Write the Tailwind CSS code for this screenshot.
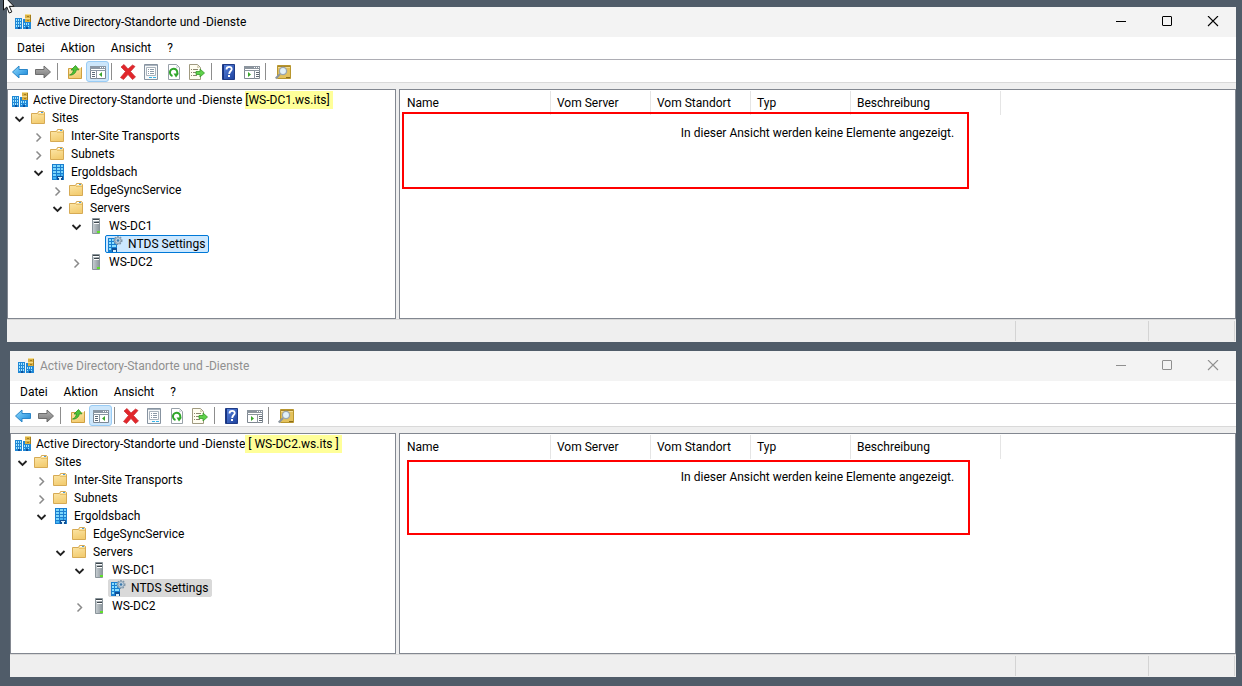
<!DOCTYPE html>
<html lang="de">
<head>
<meta charset="utf-8">
<meta name="viewport" content="width=device-width, initial-scale=1">
<title>Active Directory-Standorte und -Dienste</title>
<script src="https://cdn.jsdelivr.net/npm/@tailwindcss/browser@4"></script>
</head>
<body class="relative flex min-h-screen flex-col gap-[9px] bg-[#505c69] pt-[7px] pr-[6px] pb-[9px] font-[Roboto,'Noto_Sans',sans-serif] text-[12px] leading-[18px] text-black">

<!-- Shared icons -->
<svg class="absolute size-0" aria-hidden="true">
  <defs>
    <linearGradient id="gFolder" x1="0" y1="0" x2="0.3" y2="1"><stop offset="0" stop-color="#fde9ae"/><stop offset="1" stop-color="#f3cd72"/></linearGradient>
    <linearGradient id="gBlue" x1="0" y1="0" x2="1" y2="1"><stop offset="0" stop-color="#8fdcff"/><stop offset="1" stop-color="#1583d6"/></linearGradient>
    <linearGradient id="gGray" x1="0" y1="0" x2="0" y2="1"><stop offset="0" stop-color="#b5b5b5"/><stop offset="1" stop-color="#777"/></linearGradient>
    <linearGradient id="gServer" x1="0" y1="0" x2="1" y2="0"><stop offset="0" stop-color="#c9d0d4"/><stop offset="1" stop-color="#8b959b"/></linearGradient>
    <linearGradient id="gHelp" x1="0" y1="0" x2="1" y2="1"><stop offset="0" stop-color="#5a86e0"/><stop offset="1" stop-color="#1b3f9c"/></linearGradient>

    <symbol id="i-ad" viewBox="0 0 16 16">
      <path fill="#2088d6" d="M0 4h7v11H0zM8 5h8v10H8z"/>
      <path fill="#a5e6ff" d="M1 5h1v2H1zM3 5h1v2H3zM5 5h1v2H5zM1 8h1v2H1zM3 8h1v2H3zM5 8h1v2H5zM1 11h1v2H1zM3 11h1v2H3zM5 11h1v2H5zM9 9h1v2H9zM11 9h1v2h-1zM13 9h1v2h-1zM9 12h1v1H9zM13 12h1v1h-1z"/>
      <path fill="#0b4f9b" d="M3 13h2v2H3zM11 13h2v2h-2z"/>
      <path fill="#d9b044" d="M10 1l1-1h4l1 1v7h-6z"/>
      <path fill="#f5dd8c" d="M10 1l1-1h4l1 1zM10 4h6v1h-6z"/>
      <path fill="#a27c1e" d="M12 2h2v1h-2zM12 6h2v1h-2zM15 1h1v7h-1z"/>
    </symbol>
    <symbol id="i-folder" viewBox="0 0 16 16">
      <path fill="url(#gFolder)" stroke="#d6aa54" d="M.5 3.500h6l1-2h5l1 1v11H.5z"/>
      <path fill="#fff" d="M8 2h4v1H8z"/><path fill="#4a9be0" d="M10 2h2v1h-2z"/><path fill="#e9c26a" d="M7 4h6v1H7z"/>
    </symbol>
    <symbol id="i-site" viewBox="0 0 16 16">
      <path fill="#1a7fd0" d="M2 0h12v16H2z"/>
      <path fill="#7cd6fb" d="M3 1h3v2H3zM7 1h3v2H7zM11 1h2v2h-2zM3 4h3v2H3zM7 4h3v2H7zM11 4h2v2h-2zM3 7h3v2H3zM7 7h3v2H7zM11 7h2v2h-2zM3 10h3v2H3z"/>
      <path fill="#45b4f2" d="M7 10h3v2H7zM11 10h2v2h-2zM3 13h3v2H3z"/>
      <path fill="#0e4f96" d="M7 12h6v4H7z"/><path fill="#d9f3ff" d="M8 13h4v1H8zM9 14h2v2H9z"/>
    </symbol>
    <symbol id="i-server" viewBox="0 0 16 16">
      <path fill="url(#gServer)" stroke="#8b959b" d="M4.500 .5h7v15h-7z"/>
      <path fill="#3e474d" d="M5 1h6v1H5zM6 4h5v1H6z"/><path fill="#fff" d="M5 2h6v1H5zM6 5h5v1H6z"/>
      <path fill="#5fe02c" d="M9 13h3v2H9z"/>
    </symbol>
    <symbol id="i-ntds" viewBox="0 0 16 16">
      <path fill="#1a7fd0" d="M1 2h9v14H1z"/>
      <path fill="#8ce0ff" d="M2 3h2v2H2zM5 3h2v2H5zM2 6h2v2H2zM5 6h2v2H5zM2 9h2v2H2zM5 9h4v2H5zM2 12h2v2H2z"/>
      <path fill="#0e4f96" d="M5 12h5v4H5z"/><path fill="#d9f3ff" d="M6 14h3v2H6z"/>
      <circle cx="11" cy="4.500" r="3.700" fill="#c3d3e0" stroke="#7d95a8" stroke-width="1.600" stroke-dasharray="1.500 1.200"/>
      <circle cx="11" cy="4.500" r="3" fill="#c3d3e0" stroke="#8ba1b3"/><circle cx="11" cy="4.500" r="1.300" fill="#3b79ad"/>
    </symbol>
    <symbol id="i-open" viewBox="0 0 16 16"><path fill="none" stroke="#222" stroke-width="1.800" d="M4.500 7l4 4 4-4"/></symbol>
    <symbol id="i-closed" viewBox="0 0 16 16"><path fill="none" stroke="#8a8a8a" stroke-width="1.500" d="M6.500 5.500l4 4-4 4"/></symbol>

    <symbol id="i-back" viewBox="0 0 16 16"><path fill="url(#gBlue)" stroke="#2b86c8" stroke-linejoin="round" d="M.5 8L7 2v3.500h8.500v5H7V14z"/></symbol>
    <symbol id="i-fwd" viewBox="0 0 16 16"><path fill="url(#gGray)" stroke="#6d6d6d" stroke-linejoin="round" d="M15.500 8L9 2v3.500H.5v5H9V14z"/></symbol>
    <symbol id="i-up" viewBox="0 0 16 16">
      <path fill="url(#gFolder)" stroke="#cf9f40" d="M1.500 4.500h5l1-1h7v11h-13z"/><path fill="#fff" d="M10 3h4v1h-4z"/>
      <path fill="#4cc336" stroke="#2c8f20" stroke-width=".8" d="M2.500 11c2-.5 3.500-2 4-5H4l4.500-4.500L12 5.800H9.300C9 9 6 11.500 2.500 11z"/>
    </symbol>
    <symbol id="i-tree" viewBox="0 0 16 16">
      <path fill="#fff" stroke="#7b8794" d="M.5 2.500h15v12H.5z"/><path fill="#8b97a4" d="M0 2h16v3H0z"/><path fill="#fff" d="M10 3h1v1h-1zM12 3h1v1h-1zM14 3h1v1h-1z"/>
      <path fill="#8b97a4" d="M0 6h16v1H0zM6 6h1v9H6z"/><path fill="#5d6c7b" d="M2 8h3v1H2zM2 10h3v1H2zM2 12h3v1H2z"/><path fill="#3aa52c" d="M12 8v5l-3-2.500z"/>
    </symbol>
    <symbol id="i-del" viewBox="0 0 16 16"><path fill="#e2262b" stroke="#c92d31" stroke-width=".7" stroke-linejoin="round" d="M1 3l3-2.500 4 4.500 4.500-4L15 2.500l-4.500 5L15.500 13l-3 2.500L8 10.500 3.500 15.500.5 13.500l5-6z"/></symbol>
    <symbol id="i-props" viewBox="0 0 16 16">
      <path fill="#f7f9fa" stroke="#8793a0" d="M1.500 .5h13v15h-13z"/><path fill="#aab4bf" d="M2 1h12v1H2z"/><path fill="#fff" stroke="#a9b3bd" d="M3.500 3.500h9v8h-9z"/>
      <path fill="#8c9aa8" d="M5 5h1v1H5zM7 5h4v1H7zM5 7h1v1H5zM7 7h4v1H7zM5 9h1v1H5zM7 9h4v1H7z"/><path fill="#35b4ea" d="M6 13h3v1H6zM10 13h3v1h-3z"/>
    </symbol>
    <symbol id="i-refresh" viewBox="0 0 16 16">
      <path fill="#fff" stroke="#98a1a9" d="M2.500 .5h8l3 3v12h-11z"/><path fill="#d7dce0" d="M10 1v3h3z"/>
      <path fill="none" stroke="#30a62b" stroke-width="2" d="M6.500 12A3.700 3.700 0 1 1 11 10"/><path fill="#30a62b" d="M7.500 9.500H13L10 13.500z"/>
    </symbol>
    <symbol id="i-export" viewBox="0 0 16 16">
      <path fill="#fffdf0" stroke="#a09a80" d="M.5 .5h8l3 3v12H.5z"/><path fill="#d9d3b5" d="M8 1v3h3z"/>
      <path fill="#8b866e" d="M2 5h1v1H2zM4 5h5v1H4zM2 8h1v1H2zM4 8h3v1H4zM2 11h1v1H2zM4 11h4v1H4z"/>
      <path fill="#5fd14a" stroke="#349a27" stroke-width=".8" d="M7 7.500h4V5l4.500 4-4.500 4v-2.500H7z"/>
    </symbol>
    <symbol id="i-help" viewBox="0 0 16 16">
      <path fill="url(#gHelp)" stroke="#1f3b86" d="M1.500 .5h12v15h-12z"/><path fill="#173480" d="M2 1h1v14H2z"/>
      <path fill="none" stroke="#fff" stroke-width="1.800" d="M5.500 5.500C5.500 2 11.200 2.200 10.700 5.300 10.500 7 8.200 7.300 8.200 10"/><path fill="#fff" d="M7 11h2v2H7z"/>
    </symbol>
    <symbol id="i-panel" viewBox="0 0 16 16">
      <path fill="#fff" stroke="#7e8790" d="M.5 2.500h15v12H.5z"/><path fill="#8c959e" d="M0 2h16v3H0z"/><path fill="#fff" d="M10 3h1v1h-1zM12 3h1v1h-1zM14 3h1v1h-1z"/>
      <path fill="#8c959e" d="M0 6h16v1H0zM10 6h1v9h-1z"/><path fill="#5f6972" d="M12 8h3v1h-3zM12 10h3v1h-3zM12 12h3v1h-3z"/><path fill="#3aa52c" d="M4 8v5l3-2.500z"/>
    </symbol>
    <symbol id="i-find" viewBox="0 0 16 16">
      <path fill="#e3c15c" stroke="#b8962f" d="M2.500 1.500h13v13h-13z"/><path fill="#a98729" d="M3 2h12v1H3z"/><path fill="#f3dc92" d="M3 3h12v1H3z"/><path fill="#8a6c1c" d="M11 13h4v1h-4z"/>
      <path stroke="#8b959e" stroke-width="2" d="M.7 14.500L5 10"/><circle cx="8" cy="7" r="3.600" fill="#e2f1f9" stroke="#9aa5ae" stroke-width="1.300"/>
    </symbol>

    <symbol id="i-min" viewBox="0 0 12 12"><path stroke="currentColor" d="M1 5.500h10"/></symbol>
    <symbol id="i-max" viewBox="0 0 12 12"><rect x="1.500" y=".5" width="9" height="9" rx=".5" fill="none" stroke="currentColor"/></symbol>
    <symbol id="i-close" viewBox="0 0 12 12"><path stroke="currentColor" stroke-width="1.100" d="M1 0l10 10M11 0L1 10"/></symbol>
  </defs>
</svg>

<!-- Window: WS-DC1 -->
<section class="ml-[7px] flex flex-auto flex-col bg-[#efefef]" aria-label="WS-DC1">
  <header class="flex h-[30px] items-center bg-[#f3f3f3] pl-2">
    <svg class="size-4"><use href="#i-ad"/></svg>
    <h1 class="ml-[6px] flex-1 whitespace-nowrap">Active Directory-Standorte und -Dienste</h1>
    <button aria-label="Minimieren" class="flex h-full w-[46px] items-center justify-center"><svg class="size-3"><use href="#i-min"/></svg></button>
    <button aria-label="Maximieren" class="flex h-full w-[46px] items-center justify-center"><svg class="size-3"><use href="#i-max"/></svg></button>
    <button aria-label="Schließen" class="flex h-full w-[46px] items-center justify-center"><svg class="size-3"><use href="#i-close"/></svg></button>
  </header>
  <nav class="flex h-[23px] items-center gap-4 border-b border-[#adadb4] bg-white pl-[10px]">
    <button>Datei</button><button>Aktion</button><button>Ansicht</button><button>?</button>
  </nav>
  <div role="toolbar" aria-label="Werkzeuge" class="flex h-[23px] border-b border-[#d9d9d9] bg-white pt-px pl-px">
    <button aria-label="Zurück" class="flex w-[23px] items-center justify-center"><svg class="size-4"><use href="#i-back"/></svg></button>
    <button aria-label="Vorwärts" class="flex w-[23px] items-center justify-center"><svg class="size-4"><use href="#i-fwd"/></svg></button>
    <span class="my-[2px] mr-[5px] ml-[3px] w-px bg-[#8d8d8d]"></span>
    <button aria-label="Nach oben" class="flex w-[23px] items-center justify-center"><svg class="size-4"><use href="#i-up"/></svg></button>
    <button aria-label="Konsolenstruktur" aria-pressed="true" class="flex w-[23px] items-center justify-center rounded-[3px] border border-[#99ccf5] bg-[#cce6fb]"><svg class="size-4"><use href="#i-tree"/></svg></button>
    <span class="my-[2px] mr-[4px] ml-[2px] w-px bg-[#8d8d8d]"></span>
    <button aria-label="Löschen" class="flex w-[23px] items-center justify-center"><svg class="size-4"><use href="#i-del"/></svg></button>
    <button aria-label="Eigenschaften" class="flex w-[23px] items-center justify-center"><svg class="size-4"><use href="#i-props"/></svg></button>
    <button aria-label="Aktualisieren" class="flex w-[23px] items-center justify-center"><svg class="size-4"><use href="#i-refresh"/></svg></button>
    <button aria-label="Liste exportieren" class="flex w-[23px] items-center justify-center"><svg class="size-4"><use href="#i-export"/></svg></button>
    <span class="my-[2px] mr-[5px] ml-[3px] w-px bg-[#8d8d8d]"></span>
    <button aria-label="Hilfe" class="flex w-[23px] items-center justify-center"><svg class="size-4"><use href="#i-help"/></svg></button>
    <button aria-label="Aktionsbereich" class="flex w-[23px] items-center justify-center"><svg class="size-4"><use href="#i-panel"/></svg></button>
    <span class="my-[2px] mr-[5px] ml-[2px] w-px bg-[#8d8d8d]"></span>
    <button aria-label="Suchen" class="flex w-[23px] items-center justify-center"><svg class="size-4"><use href="#i-find"/></svg></button>
  </div>
  <div class="mt-[6px] flex min-h-[221px] flex-1 gap-[3px]">
    <div role="tree" class="w-[389px] border border-[#828790] bg-white pt-px whitespace-nowrap">
      <div role="treeitem" class="flex h-[18px] items-center pl-1"><svg class="size-4"><use href="#i-ad"/></svg><span class="ml-[5px]">Active Directory-Standorte und -Dienste&nbsp;</span><mark class="bg-[#ffff99] pr-[3px] text-black">[WS-DC1.ws.its]</mark></div>
      <ul class="pl-[3px]">
        <li><div class="flex h-[18px] items-center gap-1"><svg class="size-4"><use href="#i-open"/></svg><svg class="size-4"><use href="#i-folder"/></svg><span class="pl-px">Sites</span></div>
          <ul class="pl-[19px]">
            <li class="flex h-[18px] items-center gap-1"><svg class="size-4"><use href="#i-closed"/></svg><svg class="size-4"><use href="#i-folder"/></svg><span class="pl-px">Inter-Site Transports</span></li>
            <li class="flex h-[18px] items-center gap-1"><svg class="size-4"><use href="#i-closed"/></svg><svg class="size-4"><use href="#i-folder"/></svg><span class="pl-px">Subnets</span></li>
            <li><div class="flex h-[18px] items-center gap-1"><svg class="size-4"><use href="#i-open"/></svg><svg class="size-4"><use href="#i-site"/></svg><span class="pl-px">Ergoldsbach</span></div>
              <ul class="pl-[19px]">
                <li class="flex h-[18px] items-center gap-1"><svg class="size-4"><use href="#i-closed"/></svg><svg class="size-4"><use href="#i-folder"/></svg><span class="pl-px">EdgeSyncService</span></li>
                <li><div class="flex h-[18px] items-center gap-1"><svg class="size-4"><use href="#i-open"/></svg><svg class="size-4"><use href="#i-folder"/></svg><span class="pl-px">Servers</span></div>
                  <ul class="pl-[19px]">
                    <li><div class="flex h-[18px] items-center gap-1"><svg class="size-4"><use href="#i-open"/></svg><svg class="size-4"><use href="#i-server"/></svg><span class="pl-px">WS-DC1</span></div>
                      <ul class="pl-[37px]">
                        <li class="flex"><button class="flex h-[18px] items-center gap-[5px] rounded-xs border border-[#0078d7] bg-[#cce8ff] pr-[3px] pl-px"><svg class="size-4"><use href="#i-ntds"/></svg>NTDS Settings</button></li>
                      </ul>
                    </li>
                    <li class="flex h-[18px] items-center gap-1"><svg class="size-4"><use href="#i-closed"/></svg><svg class="size-4"><use href="#i-server"/></svg><span class="pl-px">WS-DC2</span></li>
                  </ul>
                </li>
              </ul>
            </li>
          </ul>
        </li>
      </ul>
    </div>
    <div class="relative flex-1 border border-[#828790] bg-white pt-px">
      <table class="table-fixed border-separate border-spacing-0 text-left whitespace-nowrap">
        <thead><tr class="h-6">
          <th class="w-[151px] border-r border-[#e5e5e5] pl-[7px] font-normal">Name</th>
          <th class="w-[100px] border-r border-[#e5e5e5] pl-[6px] font-normal">Vom Server</th>
          <th class="w-[100px] border-r border-[#e5e5e5] pl-[6px] font-normal">Vom Standort</th>
          <th class="w-[100px] border-r border-[#e5e5e5] pl-[6px] font-normal">Typ</th>
          <th class="w-[150px] border-r border-[#e5e5e5] pl-[6px] font-normal">Beschreibung</th>
        </tr></thead>
      </table>
      <p class="mt-[9px] text-center">In dieser Ansicht werden keine Elemente angezeigt.</p>
      <div class="absolute top-[22px] left-[2px] h-[77px] w-[567px] border-2 border-[#ff0000]"></div>
    </div>
  </div>
  <footer class="flex h-[23px] justify-end border-t border-[#d9d9d9] pr-px">
    <span class="my-px w-[133px] border-l border-[#d4d4d4]"></span>
    <span class="my-px w-[87px] border-x border-[#d4d4d4]"></span>
  </footer>
</section>

<!-- Window: WS-DC2 (inactive) -->
<section class="ml-[10px] flex flex-col bg-[#efefef]" aria-label="WS-DC2">
  <header class="flex h-[30px] items-center bg-[#f3f3f3] pl-2 text-[#8f8f8f]">
    <svg class="size-4"><use href="#i-ad"/></svg>
    <h1 class="ml-[6px] flex-1 whitespace-nowrap">Active Directory-Standorte und -Dienste</h1>
    <button aria-label="Minimieren" class="flex h-full w-[46px] items-center justify-center"><svg class="size-3"><use href="#i-min"/></svg></button>
    <button aria-label="Maximieren" class="flex h-full w-[46px] items-center justify-center"><svg class="size-3"><use href="#i-max"/></svg></button>
    <button aria-label="Schließen" class="flex h-full w-[46px] items-center justify-center"><svg class="size-3"><use href="#i-close"/></svg></button>
  </header>
  <nav class="flex h-[23px] items-center gap-4 border-b border-[#adadb4] bg-white pl-[10px]">
    <button>Datei</button><button>Aktion</button><button>Ansicht</button><button>?</button>
  </nav>
  <div role="toolbar" aria-label="Werkzeuge" class="flex h-[23px] border-b border-[#d9d9d9] bg-white pt-px pl-px">
    <button aria-label="Zurück" class="flex w-[23px] items-center justify-center"><svg class="size-4"><use href="#i-back"/></svg></button>
    <button aria-label="Vorwärts" class="flex w-[23px] items-center justify-center"><svg class="size-4"><use href="#i-fwd"/></svg></button>
    <span class="my-[2px] mr-[5px] ml-[3px] w-px bg-[#8d8d8d]"></span>
    <button aria-label="Nach oben" class="flex w-[23px] items-center justify-center"><svg class="size-4"><use href="#i-up"/></svg></button>
    <button aria-label="Konsolenstruktur" aria-pressed="true" class="flex w-[23px] items-center justify-center rounded-[3px] border border-[#99ccf5] bg-[#cce6fb]"><svg class="size-4"><use href="#i-tree"/></svg></button>
    <span class="my-[2px] mr-[4px] ml-[2px] w-px bg-[#8d8d8d]"></span>
    <button aria-label="Löschen" class="flex w-[23px] items-center justify-center"><svg class="size-4"><use href="#i-del"/></svg></button>
    <button aria-label="Eigenschaften" class="flex w-[23px] items-center justify-center"><svg class="size-4"><use href="#i-props"/></svg></button>
    <button aria-label="Aktualisieren" class="flex w-[23px] items-center justify-center"><svg class="size-4"><use href="#i-refresh"/></svg></button>
    <button aria-label="Liste exportieren" class="flex w-[23px] items-center justify-center"><svg class="size-4"><use href="#i-export"/></svg></button>
    <span class="my-[2px] mr-[5px] ml-[3px] w-px bg-[#8d8d8d]"></span>
    <button aria-label="Hilfe" class="flex w-[23px] items-center justify-center"><svg class="size-4"><use href="#i-help"/></svg></button>
    <button aria-label="Aktionsbereich" class="flex w-[23px] items-center justify-center"><svg class="size-4"><use href="#i-panel"/></svg></button>
    <span class="my-[2px] mr-[5px] ml-[2px] w-px bg-[#8d8d8d]"></span>
    <button aria-label="Suchen" class="flex w-[23px] items-center justify-center"><svg class="size-4"><use href="#i-find"/></svg></button>
  </div>
  <div class="mt-[6px] flex min-h-[221px] flex-1 gap-[3px]">
    <div role="tree" class="w-[386px] border border-[#828790] bg-white pt-px whitespace-nowrap">
      <div role="treeitem" class="flex h-[18px] items-center pl-1"><svg class="size-4"><use href="#i-ad"/></svg><span class="ml-[5px]">Active Directory-Standorte und -Dienste</span><mark class="bg-[#ffff99] px-[3px] text-black">[ WS-DC2.ws.its ]</mark></div>
      <ul class="pl-[3px]">
        <li><div class="flex h-[18px] items-center gap-1"><svg class="size-4"><use href="#i-open"/></svg><svg class="size-4"><use href="#i-folder"/></svg><span class="pl-px">Sites</span></div>
          <ul class="pl-[19px]">
            <li class="flex h-[18px] items-center gap-1"><svg class="size-4"><use href="#i-closed"/></svg><svg class="size-4"><use href="#i-folder"/></svg><span class="pl-px">Inter-Site Transports</span></li>
            <li class="flex h-[18px] items-center gap-1"><svg class="size-4"><use href="#i-closed"/></svg><svg class="size-4"><use href="#i-folder"/></svg><span class="pl-px">Subnets</span></li>
            <li><div class="flex h-[18px] items-center gap-1"><svg class="size-4"><use href="#i-open"/></svg><svg class="size-4"><use href="#i-site"/></svg><span class="pl-px">Ergoldsbach</span></div>
              <ul class="pl-[19px]">
                <li class="flex h-[18px] items-center gap-1"><span class="size-4"></span><svg class="size-4"><use href="#i-folder"/></svg><span class="pl-px">EdgeSyncService</span></li>
                <li><div class="flex h-[18px] items-center gap-1"><svg class="size-4"><use href="#i-open"/></svg><svg class="size-4"><use href="#i-folder"/></svg><span class="pl-px">Servers</span></div>
                  <ul class="pl-[19px]">
                    <li><div class="flex h-[18px] items-center gap-1"><svg class="size-4"><use href="#i-open"/></svg><svg class="size-4"><use href="#i-server"/></svg><span class="pl-px">WS-DC1</span></div>
                      <ul class="pl-[37px]">
                        <li class="flex"><button class="flex h-[18px] items-center gap-[5px] rounded-xs border border-[#d9d9d9] bg-[#d9d9d9] pr-[3px] pl-px"><svg class="size-4"><use href="#i-ntds"/></svg>NTDS Settings</button></li>
                      </ul>
                    </li>
                    <li class="flex h-[18px] items-center gap-1"><svg class="size-4"><use href="#i-closed"/></svg><svg class="size-4"><use href="#i-server"/></svg><span class="pl-px">WS-DC2</span></li>
                  </ul>
                </li>
              </ul>
            </li>
          </ul>
        </li>
      </ul>
    </div>
    <div class="relative flex-1 border border-[#828790] bg-white pt-px">
      <table class="table-fixed border-separate border-spacing-0 text-left whitespace-nowrap">
        <thead><tr class="h-6">
          <th class="w-[151px] border-r border-[#e5e5e5] pl-[7px] font-normal">Name</th>
          <th class="w-[100px] border-r border-[#e5e5e5] pl-[6px] font-normal">Vom Server</th>
          <th class="w-[100px] border-r border-[#e5e5e5] pl-[6px] font-normal">Vom Standort</th>
          <th class="w-[100px] border-r border-[#e5e5e5] pl-[6px] font-normal">Typ</th>
          <th class="w-[150px] border-r border-[#e5e5e5] pl-[6px] font-normal">Beschreibung</th>
        </tr></thead>
      </table>
      <p class="mt-[9px] text-center">In dieser Ansicht werden keine Elemente angezeigt.</p>
      <div class="absolute top-[26px] left-[7px] h-[75px] w-[563px] border-2 border-[#ff0000]"></div>
    </div>
  </div>
  <footer class="flex h-[23px] justify-end border-t border-[#d9d9d9] pr-px">
    <span class="my-px w-[133px] border-l border-[#d4d4d4]"></span>
    <span class="my-px w-[87px] border-x border-[#d4d4d4]"></span>
  </footer>
</section>

<!-- Mouse pointer -->
<svg class="absolute top-0 left-[3px] h-[15px] w-3" viewBox="0 0 12 15" aria-hidden="true"><path fill="#fff" stroke="#111" d="M.5-4.500v14.500l3.300-3 2.400 6 2.600-1.100L6.300 6.300h4.600z"/></svg>
</body>
</html>
